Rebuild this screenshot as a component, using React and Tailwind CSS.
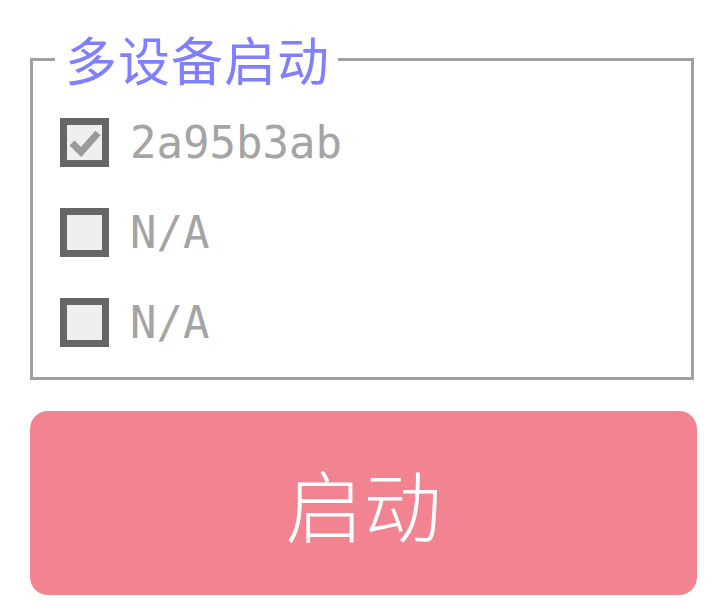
import React from "react";

const devices = [
  { id: "2a95b3ab", checked: true },
  { id: "N/A", checked: false },
  { id: "N/A", checked: false },
];

const CheckBox = ({ checked }) => (
  <div className="w-[49px] h-[49px] border-[7px] border-[#666666] bg-[#efefef] flex items-center justify-center shrink-0">
    {checked && (
      <svg width="32" height="28" viewBox="0 0 32 28">
        <path d="M3 14 L12 23 L29 4" fill="none" stroke="#9a9a9a" strokeWidth="7" strokeLinejoin="miter" />
      </svg>
    )}
  </div>
);

export default function App() {
  return (
    <div className="w-[720px] h-[611px] bg-white pt-[32px] pl-[30px] overflow-hidden">
      {/* Device list */}
      <fieldset className="w-[664px] h-[348px] border-[3px] border-[#a0a0a0] px-[22px] m-0">
        <legend
          className="pl-[10px] pr-[8px] text-[52px] leading-[54px] text-[#7f7fff] tracking-[1px]"
          style={{ fontFamily: '"Noto Sans CJK SC", sans-serif' }}
        >
          多设备启动
        </legend>
        <div className="flex flex-col gap-[41px] pt-[32px] pl-[5px]">
          {devices.map((d, i) => (
            <label key={i} className="flex items-center gap-[21px]">
              <CheckBox checked={d.checked} />
              <span
                className="text-[44px] leading-[49px] text-[#a4a4a4]"
                style={{ fontFamily: '"DejaVu Sans Mono", monospace' }}
              >
                {d.id}
              </span>
            </label>
          ))}
        </div>
      </fieldset>

      {/* Start button */}
      <button
        className="mt-[31px] w-[667px] h-[184px] rounded-[18px] bg-[#f28391] text-white text-[78px] font-light flex items-center justify-center"
        style={{ fontFamily: '"Noto Sans CJK SC", sans-serif' }}
      >
        启动
      </button>
    </div>
  );
}
